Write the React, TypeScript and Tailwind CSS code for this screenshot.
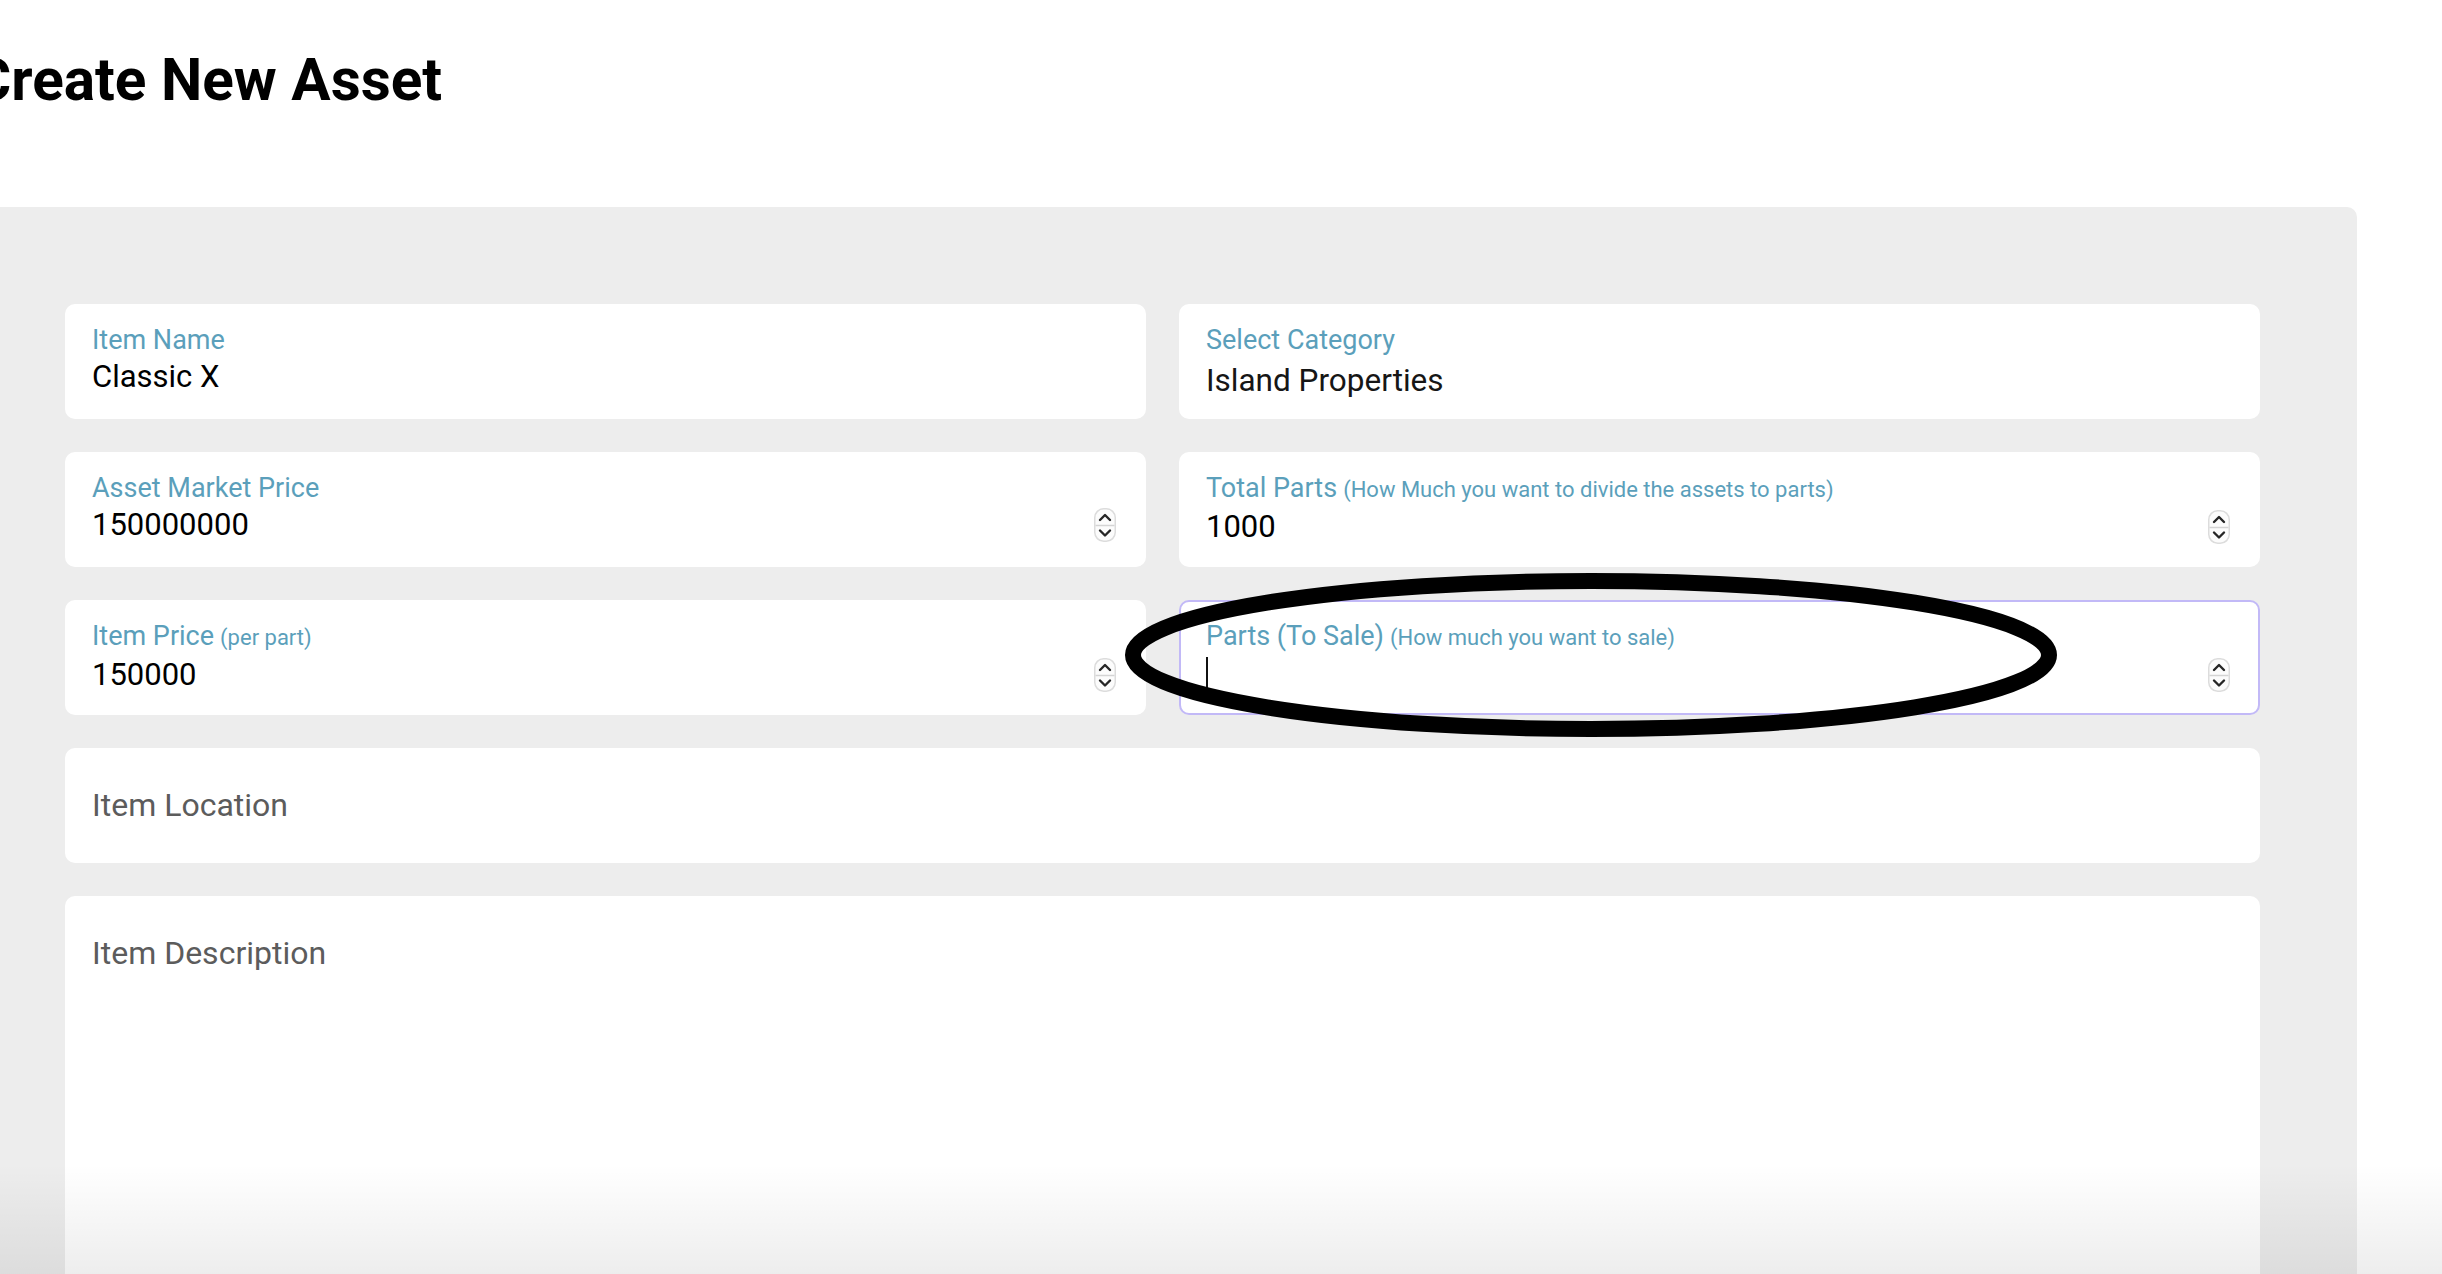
import React from "react";

const FONT = { fontFamily: "Roboto, 'Noto Sans', Arial, sans-serif" };

// Native-looking number stepper (up / down chevrons in a rounded pill)
function Stepper() {
  return (
    <svg width="22" height="34" viewBox="0 0 22 34" className="mr-[3px] shrink-0">
      <rect x="0.75" y="0.75" width="20.5" height="32.5" rx="9" fill="#fcfcfc" stroke="#dcdcdc" strokeWidth="1.5" />
      <line x1="1.5" y1="17.5" x2="20.5" y2="17.5" stroke="#d4d4d4" strokeWidth="1.5" />
      <path d="M6 12 L11 7 L16 12" fill="none" stroke="#262626" strokeWidth="2.4" strokeLinecap="round" strokeLinejoin="round" />
      <path d="M6 22.5 L11 27.5 L16 22.5" fill="none" stroke="#262626" strokeWidth="2.4" strokeLinecap="round" strokeLinejoin="round" />
    </svg>
  );
}

type FieldProps = {
  label: string;
  hint?: string;
  value?: string;
  stepper?: boolean;
  focused?: boolean;
};

function Label({ label, hint }: { label: string; hint?: string }) {
  return (
    <div className="text-[27px] leading-[30px] text-[#5b9fbb] whitespace-nowrap">
      {label}
      {hint && <span className="ml-[6px] text-[22px]">{hint}</span>}
    </div>
  );
}

function Field({ label, hint, value = "", stepper, focused }: FieldProps) {
  return (
    <div
      className={
        focused
          ? "h-[115px] rounded-[10px] border-2 border-[#c2b9f7] bg-white px-[25px] pt-[19px]"
          : "h-[115px] rounded-[10px] bg-white px-[27px] pt-[21px]"
      }
    >
      <Label label={label} hint={hint} />
      <div className="mt-[4px] flex h-[36px] items-center">
        <div className="relative min-w-0 flex-1">
          <input
            type="text"
            inputMode="numeric"
            defaultValue={value}
            style={FONT}
            className="h-[36px] w-full bg-transparent text-[31px] leading-[36px] text-black caret-transparent outline-none"
          />
          {focused && <span className="absolute left-0 top-[0px] h-[33px] w-[2px] bg-[#111]" />}
        </div>
        {stepper && <Stepper />}
      </div>
    </div>
  );
}

function CategorySelect() {
  return (
    <div className="h-[115px] rounded-[10px] bg-white px-[27px] pt-[21px]">
      <Label label="Select Category" />
      <select
        defaultValue="island"
        style={FONT}
        className="mt-[8px] h-[36px] w-full appearance-none bg-transparent text-[31.5px] leading-[36px] text-[#161616] outline-none"
      >
        <option value="island">Island Properties</option>
        <option value="city">City Properties</option>
        <option value="vehicles">Vehicles</option>
      </select>
    </div>
  );
}

export default function App() {
  return (
    <div style={FONT} className="relative h-[1274px] w-[2442px] overflow-hidden bg-white">
      <div className="-ml-[32px]">
        <h1 className="pl-[5px] pt-[46px] text-[58.5px] font-bold leading-[68px] text-black whitespace-nowrap">
          Create New Asset
        </h1>

        <div className="mt-[93px] w-[2389px] rounded-[10px] bg-[#ededed] px-[97px] pt-[97px] pb-[60px]">
          <div className="grid grid-cols-2 gap-[33px]">
            <Field label="Item Name" value="Classic X" />
            <CategorySelect />

            <Field label="Asset Market Price" value="150000000" stepper />
            <Field
              label="Total Parts"
              hint="(How Much you want to divide the assets to parts)"
              value="1000"
              stepper
            />

            <Field label="Item Price" hint="(per part)" value="150000" stepper />
            <Field label="Parts (To Sale)" hint="(How much you want to sale)" stepper focused />

            <div className="col-span-2 flex h-[115px] items-center rounded-[10px] bg-white px-[27px]">
              <input
                type="text"
                placeholder="Item Location"
                style={FONT}
                className="h-[37px] w-full bg-transparent text-[32px] leading-[37px] text-black outline-none placeholder:text-[#5c5c5c]"
              />
            </div>

            <textarea
              placeholder="Item Description"
              style={FONT}
              className="col-span-2 h-[480px] resize-none rounded-[10px] bg-white px-[27px] pt-[39px] text-[32px] leading-[36px] text-black outline-none placeholder:text-[#5c5c5c]"
            />
          </div>
        </div>
      </div>

      {/* soft fade along the bottom edge */}
      <div className="pointer-events-none absolute bottom-0 left-0 right-0 h-[110px] bg-linear-to-b from-transparent to-black/[0.07]" />

      {/* hand-drawn highlight ring around the "Parts (To Sale)" field */}
      <svg
        className="pointer-events-none absolute left-0 top-0"
        width="2442"
        height="1274"
        viewBox="0 0 2442 1274"
      >
        <ellipse cx="1591" cy="655" rx="458" ry="74" fill="none" stroke="#000" strokeWidth="16" />
      </svg>
    </div>
  );
}
